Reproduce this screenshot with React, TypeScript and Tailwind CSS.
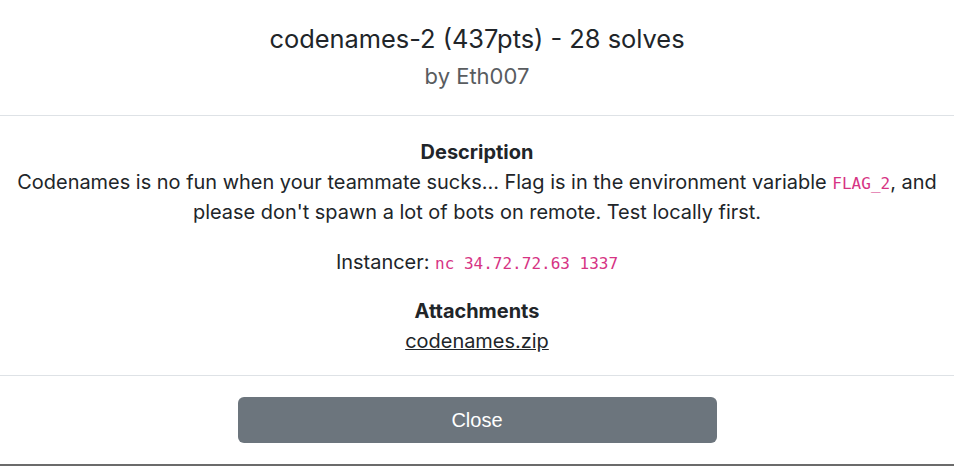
const App = () => {
  return (
    <div className="w-full h-[466px] bg-white text-[#212529] font-['Inter',sans-serif] flex flex-col">
      <div className="flex flex-col items-center border-b border-[#dee2e6] pt-[23px] h-[116px]">
        <h1 className="text-[25.4px] leading-[32px] font-normal">
          codenames-2 (437pts) - 28 solves
        </h1>
        <h2 className="text-[22px] leading-[28px] text-[#595c5f] mt-[7px]">by Eth007</h2>
      </div>
      <div className="flex flex-col items-center text-center text-[19.95px] leading-[29.5px] pt-[22px] pb-[19px] border-b border-[#dee2e6]">
        <p className="font-bold">Description</p>
        <p className="max-w-[940px]">
          Codenames is no fun when your teammate sucks... Flag is in the environment variable{" "}
          <code className="font-['DejaVu_Sans_Mono',monospace] text-[16px] text-[#d63384]">FLAG_2</code>,
          and please don't spawn a lot of bots on remote. Test locally first.
        </p>
        <p className="mt-[20px]">
          Instancer:{" "}
          <code className="font-['DejaVu_Sans_Mono',monospace] text-[16px] text-[#d63384]">
            nc 34.72.72.63 1337
          </code>
        </p>
        <p className="font-bold mt-[19px]">Attachments</p>
        <a href="#" className="underline">
          codenames.zip
        </a>
      </div>
      <div className="flex-1 flex justify-center pt-[21px] border-b-2 border-[#6b6b6b]">
        <button
          type="button"
          className="w-[479px] h-[46px] rounded-[6px] bg-[#6c757d] text-white text-[20px] font-['Liberation_Sans',sans-serif]"
        >
          Close
        </button>
      </div>
    </div>
  );
};

export default App;
